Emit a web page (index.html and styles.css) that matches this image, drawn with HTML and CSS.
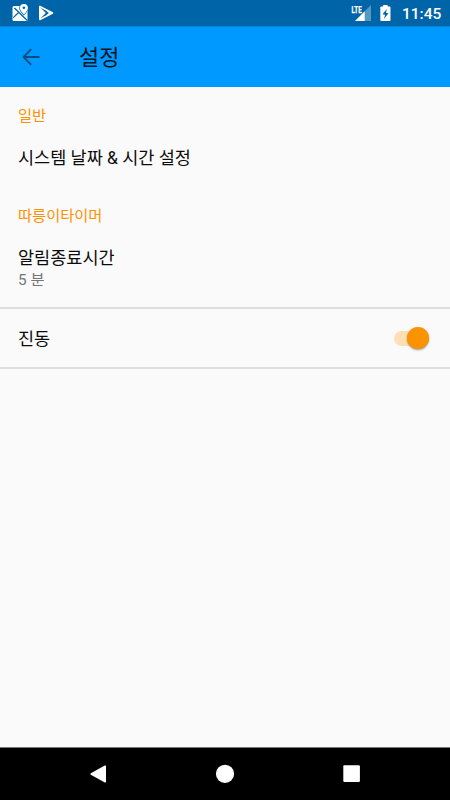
FILE: index.html
```html
<!DOCTYPE html>
<html lang="ko">
<head>
<meta charset="utf-8">
<title>설정</title>
<link rel="stylesheet" href="styles.css">
</head>
<body>
<div class="screen">
  <header class="status">
    <svg class="map-icon" width="18" height="18" viewBox="0 0 18 18">
      <rect x=".5" y="2" width="15" height="15" rx="1.5" fill="#fff"/>
      <path fill="none" stroke="#0065a8" stroke-width="1.3" d="M6.8 8.2L15 16.3M1.3 13.6L6.8 8.2L2.5 4"/>
      <path fill="#0065a8" d="M11.8-.5A4.6 4.6 0 0 1 16.4 4C16.4 7.1 11.8 11.5 11.8 11.5S7.2 7.1 7.2 4A4.6 4.6 0 0 1 11.8-.5Z"/>
      <path fill="#fff" fill-rule="evenodd" d="M11.9 0A4 4 0 0 1 15.9 4C15.9 6.7 11.9 10.5 11.9 10.5S7.9 6.7 7.9 4A4 4 0 0 1 11.9 0ZM11.9 2.5A1.3 1.3 0 1 0 11.9 5.1A1.3 1.3 0 1 0 11.9 2.5Z"/>
    </svg>
    <svg class="play-icon" width="16" height="16" viewBox="0 0 16 16">
      <path fill="#fff" d="M0 1V15L6.8 8Z"/>
      <path fill="none" stroke="#fff" stroke-width="1.6" stroke-linejoin="round" d="M.4 1.3L13.5 8L.4 14.7M7.5 5L10.8 8L7.5 11"/>
      <path fill="#fff" d="M10.2 5.8L14.4 8L10.2 10.2L11.8 8Z"/>
    </svg>
    <svg class="signal-icon" width="20" height="18" viewBox="0 0 20 18">
      <path fill="#5798c3" d="M20 1V17H4Z"/>
      <path fill="#fff" d="M13.7 7.3V17H4Z"/>
      <path fill="#0065a8" d="M0 0H11.5V9.5H0Z"/>
      <text class="lte" x=".6" y="8.6" textLength="10.2" lengthAdjust="spacingAndGlyphs">LTE</text>
    </svg>
    <svg class="battery-icon" width="11" height="17" viewBox="0 0 11 17">
      <path fill="#fff" d="M3.2 0H7.6V1.6H9.6Q10.5 1.6 10.5 2.6V15Q10.5 16 9.6 16H1.3Q.3 16 .3 15V2.6Q.3 1.6 1.3 1.6H3.2Z"/>
      <path fill="#0065a8" d="M7 3.8L2.5 9.3L5.1 9.8L4 13.9L8.4 8.3L5.9 7.8Z"/>
    </svg>
    <time>11:45</time>
  </header>
  <div class="toolbar">
    <svg width="18" height="18" viewBox="0 0 18 18">
      <path fill="none" stroke="#044f80" stroke-width="1.9" d="M17.5 9H1.8M9.2 1.2L1.6 9L9.2 16.8"/>
    </svg>
    <h1>설정</h1>
  </div>
  <main>
    <h2>일반</h2>
    <div class="row date">시스템 날짜 &amp; 시간 설정</div>
    <h2>따릉이타이머</h2>
    <div class="row timer"><span>알림종료시간</span><small>5 분</small></div>
    <div class="row vibrate"><span>진동</span><div class="track"><div class="thumb"></div></div></div>
  </main>
  <nav>
    <svg width="450" height="52" viewBox="0 0 450 52">
      <path fill="#fff" d="M104.8 17.6Q106 17 106 18.2V33.8Q106 35 104.8 34.4L90.8 26.7Q90 26 90.8 25.3Z"/>
      <circle cx="225" cy="25.8" r="9.1" fill="#fff"/>
      <rect x="343.3" y="17.3" width="16.6" height="16.6" rx="1" fill="#fff"/>
    </svg>
  </nav>
</div>
</body>
</html>
```
FILE: styles.css
```css
* { box-sizing: border-box; }
body { margin: 0; font-family: Roboto, "Noto Sans CJK KR", sans-serif; }
h1, h2 { margin: 0; font-weight: 400; }
svg { display: block; flex: none; }
.screen {
  width: 450px;
  height: 800px;
  display: flex;
  flex-direction: column;
  background: #fafafa;
  overflow: hidden;
}
.status {
  height: 26px;
  flex: none;
  background: #0065a8;
  color: #fff;
  display: flex;
  align-items: flex-start;
  padding: 4px 8px 0 12px;
}
.play-icon { margin: 1px 0 0 9px; }
.signal-icon { margin: 0 0 0 auto; }
.lte { font: 700 9.5px Roboto, sans-serif; fill: #fff; stroke: #fff; stroke-width: .25px; }
.battery-icon { margin: 1px 11px 0 9px; }
time { font-size: 15.5px; font-weight: 500; line-height: 20px; width: 40px; white-space: nowrap; }
.toolbar {
  height: 61px;
  flex: none;
  display: flex;
  align-items: center;
  gap: 39px;
  padding-left: 22px;
  background: #0099ff;
  border-top: 1px solid #0083d9;
}
h1 { font-size: 21.9px; line-height: 32px; padding-top: 2px; color: #021723; }
main { flex: 1; }
h2 { font-size: 15.3px; line-height: 22px; color: #ff9100; padding: 18px 18px 0; }
.row { font-size: 17.5px; color: #0c0c0c; padding: 0 18px; }
.date { height: 60px; line-height: 62px; word-spacing: -.05px; }
.timer {
  height: 80px;
  padding-top: 18px;
  display: flex;
  flex-direction: column;
}
.timer span { line-height: 26px; }
.timer small { font-size: 15.3px; line-height: 18px; color: #757575; }
.vibrate {
  height: 62px;
  display: flex;
  align-items: center;
  justify-content: space-between;
  border: solid #dedede;
  border-width: 2px 0;
  padding-right: 21px;
}
.vibrate span { line-height: 24px; padding-top: 1px; }
.track {
  width: 35px;
  height: 15px;
  border-radius: 8px;
  background: #fddfb5;
  display: flex;
  align-items: center;
  justify-content: flex-end;
}
.thumb {
  width: 22px;
  height: 22px;
  flex: none;
  border-radius: 50%;
  background: #fb9300;
  box-shadow: 0 1px 2px rgba(0, 0, 0, .4);
}
nav { height: 53px; flex: none; background: #000; border-top: 1px solid #777; }
```
